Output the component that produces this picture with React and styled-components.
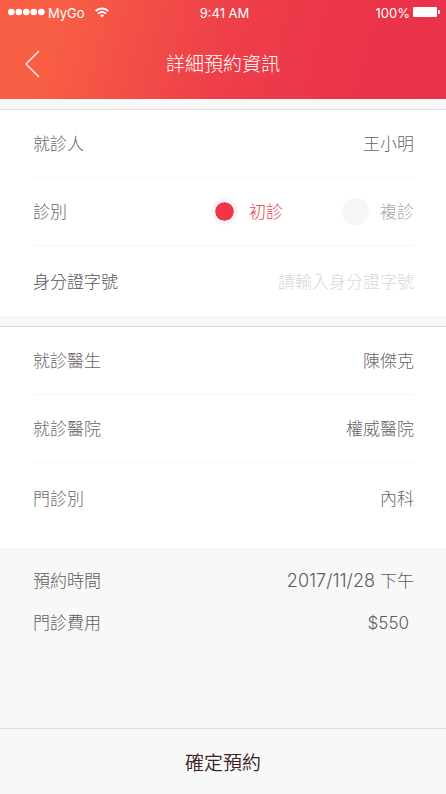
import React from "react";
import styled, { createGlobalStyle } from "styled-components";

const Global = createGlobalStyle`
  *, *::before, *::after { box-sizing: border-box; }
  body { margin: 0; background: #f8f8f8; }
  button, input { font: inherit; }
`;

const Screen = styled.div`
  display: flex;
  flex-direction: column;
  min-height: 100vh;
  font-family: Inter, "Noto Sans CJK TC", sans-serif;
  font-size: 17px;
  font-weight: 300;
  color: #6a6464;
`;

const Header = styled.header`
  color: #fff;
  background: linear-gradient(105deg, #f85f44 12%, #ee3f49 50%, #eb3549 75%, #ea304a 100%);
`;

const StatusBar = styled.div`
  display: grid;
  grid-template-columns: 1fr auto 1fr;
  align-items: center;
  height: 26px;
  padding: 0 5px 0 8px;
  font-size: 13px;
  font-weight: 400;
`;

const StatusGroup = styled.div`
  display: flex;
  align-items: center;
  justify-content: ${(p) => (p.$end ? "flex-end" : "flex-start")};
  gap: 3px;

  svg { margin-bottom: 2px; }
`;

const Carrier = styled.span`
  margin-right: 6px;
`;

const NavBar = styled.div`
  display: grid;
  grid-template-columns: 48px 1fr 48px;
  align-items: center;
  height: 73px;
  padding: 5px 8px 0;
`;

const BackButton = styled.button`
  display: grid;
  place-items: center;
  height: 48px;
  padding: 0 0 2px;
  border: 0;
  background: none;
  color: inherit;
`;

const Title = styled.h1`
  margin: 0;
  font-size: 19px;
  font-weight: 300;
  line-height: 24px;
  text-align: center;
`;

const Form = styled.form`
  display: flex;
  flex: 1;
  flex-direction: column;
`;

const Card = styled.section`
  margin-top: 10px;
  padding: 0 32px ${(p) => (p.$roomy ? "15px" : "0")} 33px;
  border-top: 1px solid #dedede;
  background: #fff;
`;

const Row = styled.div`
  display: flex;
  align-items: center;
  justify-content: space-between;
  height: ${(p) => (p.$tall ? 71 : 68)}px;
  padding-top: ${(p) => (p.$tall ? 2 : 0)}px;
  line-height: 24px;

  &:first-child { height: 67px; }
  & + & { border-top: 1px solid #f6f6f6; }
`;

const Label = styled.label`
  color: #555;
`;

const Choices = styled.div`
  display: flex;
  gap: 59px;
`;

const Choice = styled.label`
  display: flex;
  align-items: center;
  gap: 11px;
  color: #aaa6a6;

  &:has(input:checked) { color: #ee3c4b; }
`;

const Radio = styled.input`
  appearance: none;
  width: 27px;
  height: 27px;
  margin: 0;
  border: 4px solid #f6f6f6;
  border-radius: 50%;
  background: #f6f6f6;

  &:checked { background: #ee3648; background-clip: padding-box; }
`;

const TextBox = styled.input`
  flex: 1;
  min-width: 0;
  padding: 0;
  border: 0;
  outline: 0;
  background: none;
  color: inherit;
  text-align: right;

  &::placeholder { color: #d8d8d8; opacity: 1; }
`;

const Summary = styled.section`
  flex: 1;
  padding: 12px 32px 12px 33px;
  color: #5c5c5c;
`;

const SummaryRow = styled.div`
  display: flex;
  justify-content: space-between;
  height: 42px;
  padding-right: ${(p) => (p.$inset ? "5px" : "0")};
  line-height: 42px;
`;

const DateText = styled.span`
  font-size: 18px;
`;

const Period = styled.span`
  font-size: 17px;
`;

const Confirm = styled.button`
  height: 66px;
  padding: 0 0 1px;
  border: 0;
  border-top: 1px solid #dedede;
  background: #f8f8f8;
  color: #3a2224;
  font-size: 19px;
  font-weight: 350;
`;

function App() {
  return (
    <Screen>
      <Global />
      <Header>
        <StatusBar>
          <StatusGroup>
            <svg width="37" height="8" fill="currentColor" aria-hidden="true">
              {[3.3, 10.8, 18.3, 25.8, 33.3].map((x) => <circle key={x} cx={x} cy="4" r="3.3" />)}
            </svg>
            <Carrier>MyGo</Carrier>
            <svg width="16" height="11" viewBox="0 0 16 11" fill="none" stroke="currentColor" strokeWidth="1.9" aria-hidden="true">
              <path d="M1.7 4a9 9 0 0 1 12.6 0M4 6.6a5.8 5.8 0 0 1 8 0" />
              <path d="M8 10.6 5.9 8.5a3 3 0 0 1 4.2 0Z" fill="currentColor" stroke="none" />
            </svg>
          </StatusGroup>
          <span>9:41 AM</span>
          <StatusGroup $end>
            <span>100%</span>
            <svg width="28" height="10" fill="currentColor" aria-hidden="true">
              <rect width="24" height="10" rx="1" />
              <path d="M25 3h1q1 0 1 2t-1 2h-1Z" />
            </svg>
          </StatusGroup>
        </StatusBar>
        <NavBar>
          <BackButton type="button" aria-label="返回">
            <svg width="16" height="28" fill="none" stroke="currentColor" strokeWidth="1.3" aria-hidden="true">
              <path d="M15 1 2 14l13 13" />
            </svg>
          </BackButton>
          <Title>詳細預約資訊</Title>
        </NavBar>
      </Header>
      <Form onSubmit={(e) => e.preventDefault()}>
        <Card>
          <Row><span>就診人</span><span>王小明</span></Row>
          <Row>
            <span id="visit">診別</span>
            <Choices role="radiogroup" aria-labelledby="visit">
              <Choice><Radio type="radio" name="visit" defaultChecked />初診</Choice>
              <Choice><Radio type="radio" name="visit" />複診</Choice>
            </Choices>
          </Row>
          <Row $tall>
            <Label htmlFor="identity">身分證字號</Label>
            <TextBox id="identity" placeholder="請輸入身分證字號" />
          </Row>
        </Card>
        <Card $roomy>
          <Row><span>就診醫生</span><span>陳傑克</span></Row>
          <Row><span>就診醫院</span><span>權威醫院</span></Row>
          <Row $tall><span>門診別</span><span>內科</span></Row>
        </Card>
        <Summary>
          <SummaryRow>
            <span>預約時間</span>
            <DateText>2017/11/28 <Period>下午</Period></DateText>
          </SummaryRow>
          <SummaryRow $inset><span>門診費用</span><span>$550</span></SummaryRow>
        </Summary>
        <Confirm type="submit">確定預約</Confirm>
      </Form>
    </Screen>
  );
}

export default App;
